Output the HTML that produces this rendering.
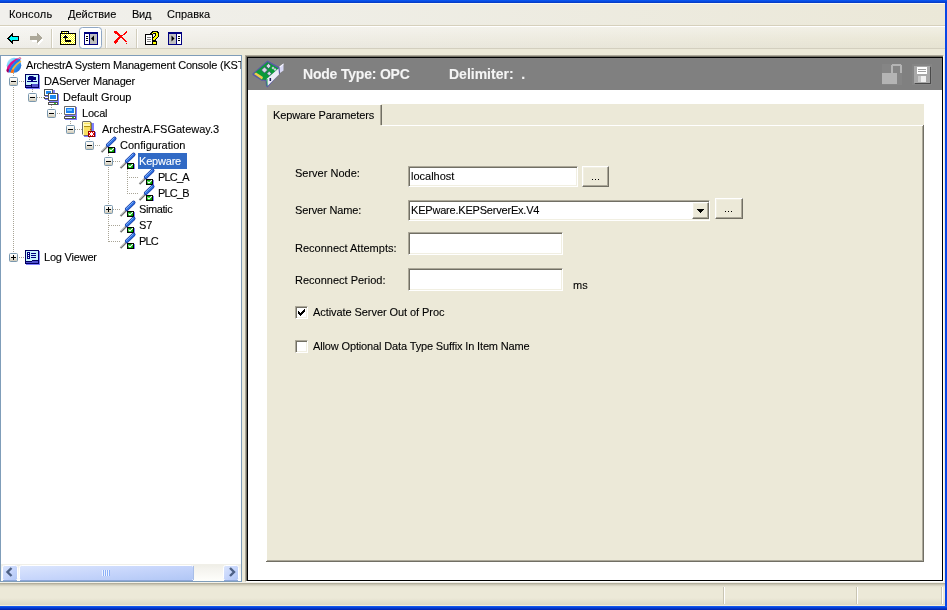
<!DOCTYPE html>
<html><head><meta charset="utf-8">
<style>
*{margin:0;padding:0;box-sizing:border-box}
html,body{width:947px;height:610px;overflow:hidden;background:#ECE9D8;font-family:"Liberation Sans",sans-serif;font-size:11px;color:#000}
.a{position:absolute}
.t{position:absolute;white-space:nowrap;line-height:13px;will-change:transform;-webkit-text-stroke:0.1px currentColor}
.sunk{background:#fff;border-style:solid;border-width:1px;border-color:#ACA899 #FFFFFF #FFFFFF #ACA899;box-shadow:inset 1px 1px 0 #716F64, inset -1px -1px 0 #F1EFE2}
.btn{background:#ECE9D8;border-style:solid;border-width:1px;border-color:#FFFFFF #716F64 #716F64 #FFFFFF;box-shadow:inset -1px -1px 0 #ACA899, inset 1px 1px 0 #F1EFE2}
</style></head><body>
<!-- blue frame -->
<div class="a" style="left:0;top:0;width:947px;height:3px;background:linear-gradient(#0A5AF6,#0846D8 60%,#0438C0)"></div>
<div class="a" style="left:0;top:3px;width:945px;height:1px;background:#FBFAF2"></div>
<div class="a" style="left:945px;top:3px;width:2px;height:603px;background:#0846E6"></div>
<div class="a" style="left:0;top:606px;width:947px;height:4px;background:linear-gradient(#1A60F4,#0440D8 40%,#0020A8)"></div>

<!-- menu bar -->
<div class="a" style="left:0;top:4px;width:945px;height:21px;background:linear-gradient(90deg,#F1F0EC,#EFEEE7 30%,#EBE8D8)"></div>
<div class="a" style="left:0;top:25px;width:945px;height:1px;background:#D6D0BC"></div>
<div class="a" style="left:0;top:26px;width:945px;height:1px;background:#FFFFFF"></div>
<div class="t" style="left:9px;top:8px;letter-spacing:0.15px">Консоль</div>
<div class="t" style="left:68px;top:8px">Действие</div>
<div class="t" style="left:132px;top:8px;letter-spacing:-0.3px">Вид</div>
<div class="t" style="left:167px;top:8px">Справка</div>

<!-- toolbar -->
<div class="a" style="left:0;top:27px;width:945px;height:21px;background:linear-gradient(rgba(255,255,255,0.35),rgba(255,255,255,0) 60%,rgba(0,0,0,0.02)),linear-gradient(90deg,#F2F1EC,#EFEDE5 30%,#EAE7D6)"></div>
<div class="a" style="left:0;top:48px;width:945px;height:1px;background:#D3CFBF"></div>


<svg class="a" style="left:0;top:26px" width="200" height="24" viewBox="0 26 200 24" shape-rendering="crispEdges">
<defs><pattern id="chk" width="2" height="2" patternUnits="userSpaceOnUse"><rect width="2" height="2" fill="#fff"/><rect width="1" height="1" fill="#FFFF00"/><rect x="1" y="1" width="1" height="1" fill="#FFFF00"/></pattern></defs>
<!-- back arrow -->
<polygon points="7,38 12,33 13,33 13,36 19,36 19,41 13,41 13,44 12,44" fill="#000"/>
<polygon points="9,38 12,35 12,37 18,37 18,40 12,40 12,42" fill="#00FFFF"/>
<!-- forward arrow disabled -->
<polygon points="31,37 37,37 37,34 43,39 37,44 37,41 31,41" fill="#fff" transform="translate(1,1)"/>
<polygon points="30,36 37,36 37,33 42,38 37,43 37,40 30,40" fill="#ACA899"/>
<!-- separators -->
<rect x="51" y="29" width="1" height="19" fill="#D1CDBC"/><rect x="52" y="29" width="1" height="19" fill="#fff"/>
<rect x="105" y="29" width="1" height="19" fill="#D1CDBC"/><rect x="106" y="29" width="1" height="19" fill="#fff"/>
<rect x="136" y="29" width="1" height="19" fill="#D1CDBC"/><rect x="137" y="29" width="1" height="19" fill="#fff"/>
<!-- folder up -->
<rect x="61" y="31" width="8" height="3" fill="#000"/>
<rect x="62" y="32" width="6" height="1" fill="url(#chk)"/>
<rect x="60" y="33" width="16" height="12" fill="#000"/>
<rect x="61" y="34" width="14" height="10" fill="url(#chk)"/>
<polygon points="65,35 68,38 66,38 66,40 71,40 71,42 65,42 65,38 63,38" fill="#000"/>
<!-- checked button -->
<rect x="79.5" y="27.5" width="22" height="21" rx="3" fill="#fff" stroke="#8FA7C4" stroke-width="1" shape-rendering="auto"/>
<!-- show tree icon -->
<rect x="84" y="32" width="14" height="13" fill="#000080"/>
<rect x="85" y="34" width="4" height="10" fill="#fff"/>
<rect x="90" y="34" width="7" height="10" fill="#C0C0C0"/>
<rect x="86" y="36" width="2" height="1" fill="#000"/><rect x="86" y="38" width="2" height="1" fill="#000"/><rect x="86" y="40" width="2" height="1" fill="#000"/>
<polygon points="91,38.5 94,35.5 94,41.5" fill="#000" shape-rendering="auto"/>
<!-- red X -->
<g fill="#FF0000"><rect x="114" y="31" width="3" height="1"/><rect x="126" y="31" width="1" height="1"/><rect x="114" y="32" width="4" height="1"/><rect x="125" y="32" width="2" height="1"/><rect x="115" y="33" width="4" height="1"/><rect x="124" y="33" width="2" height="1"/><rect x="117" y="34" width="3" height="1"/><rect x="123" y="34" width="2" height="1"/><rect x="118" y="35" width="5" height="1"/><rect x="119" y="36" width="3" height="1"/><rect x="118" y="37" width="5" height="1"/><rect x="117" y="38" width="3" height="1"/><rect x="122" y="38" width="2" height="1"/><rect x="116" y="39" width="3" height="1"/><rect x="123" y="39" width="2" height="1"/><rect x="115" y="40" width="3" height="1"/><rect x="124" y="40" width="2" height="1"/><rect x="114" y="41" width="4" height="1"/><rect x="125" y="41" width="2" height="1"/><rect x="114" y="42" width="3" height="1"/><rect x="115" y="43" width="1" height="1"/><rect x="126" y="43" width="1" height="1"/></g>
<!-- help -->
<rect x="145" y="34" width="8" height="11" fill="#000"/>
<rect x="146" y="35" width="6" height="9" fill="#fff"/>
<rect x="147" y="37" width="4" height="1" fill="#808080"/><rect x="147" y="39" width="4" height="1" fill="#808080"/><rect x="147" y="41" width="4" height="1" fill="#808080"/>
<path d="M150,34 L150,33 L152,31 L157,31 L159,33 L159,36 L156,39 L156,41 L152,41 L152,38 L155,35 L155,34 L153,34 L152,35 Z" fill="#000"/>
<path d="M151,34 L152,33 L153,32 L156,32 L158,34 L158,36 L155,39 L155,40 L153,40 L153,38 L156,35 L156,34 L155,33 L153,33 L152,34 Z" fill="#FFFF00"/>
<rect x="152" y="41" width="5" height="4" fill="#000"/><rect x="153" y="42" width="3" height="2" fill="#FFFF00"/>
<!-- action pane icon -->
<rect x="168" y="32" width="14" height="13" fill="#000080"/>
<rect x="169" y="34" width="7" height="10" fill="#C0C0C0"/>
<rect x="177" y="34" width="4" height="10" fill="#fff"/>
<rect x="178" y="36" width="2" height="1" fill="#000"/><rect x="178" y="38" width="2" height="1" fill="#000"/><rect x="178" y="40" width="2" height="1" fill="#000"/>
<polygon points="174.5,38.5 171.5,35.5 171.5,41.5" fill="#000" shape-rendering="auto"/>
</svg>

<!-- tree panel -->
<div class="a" style="left:0;top:55px;width:242px;height:527px;border:1px solid #7F9DB9;background:#fff"></div>
<svg class="a" style="left:0;top:0" width="242" height="290" viewBox="0 0 242 290">
<defs>
<linearGradient id="expg" x1="0" y1="0" x2="0" y2="1"><stop offset="0" stop-color="#FFFFFF"/><stop offset="0.5" stop-color="#F0EEE6"/><stop offset="1" stop-color="#C9C3B0"/></linearGradient>
<linearGradient id="archg" x1="0" y1="0" x2="1" y2="1"><stop offset="0" stop-color="#D8FAFF"/><stop offset="0.45" stop-color="#40B8F8"/><stop offset="1" stop-color="#1850D0"/></linearGradient>
</defs>

<g fill="#A8A496" shape-rendering="crispEdges"><rect x="13" y="73" width="1" height="1"/><rect x="13" y="75" width="1" height="1"/><rect x="13" y="77" width="1" height="1"/><rect x="13" y="79" width="1" height="1"/><rect x="13" y="81" width="1" height="1"/><rect x="13" y="81" width="1" height="1"/><rect x="15" y="81" width="1" height="1"/><rect x="17" y="81" width="1" height="1"/><rect x="19" y="81" width="1" height="1"/><rect x="21" y="81" width="1" height="1"/><rect x="23" y="81" width="1" height="1"/><rect x="32" y="89" width="1" height="1"/><rect x="32" y="91" width="1" height="1"/><rect x="32" y="93" width="1" height="1"/><rect x="32" y="95" width="1" height="1"/><rect x="32" y="97" width="1" height="1"/><rect x="33" y="97" width="1" height="1"/><rect x="35" y="97" width="1" height="1"/><rect x="37" y="97" width="1" height="1"/><rect x="39" y="97" width="1" height="1"/><rect x="41" y="97" width="1" height="1"/><rect x="43" y="97" width="1" height="1"/><rect x="51" y="105" width="1" height="1"/><rect x="51" y="107" width="1" height="1"/><rect x="51" y="109" width="1" height="1"/><rect x="51" y="111" width="1" height="1"/><rect x="51" y="113" width="1" height="1"/><rect x="51" y="113" width="1" height="1"/><rect x="53" y="113" width="1" height="1"/><rect x="55" y="113" width="1" height="1"/><rect x="57" y="113" width="1" height="1"/><rect x="59" y="113" width="1" height="1"/><rect x="61" y="113" width="1" height="1"/><rect x="70" y="121" width="1" height="1"/><rect x="70" y="123" width="1" height="1"/><rect x="70" y="125" width="1" height="1"/><rect x="70" y="127" width="1" height="1"/><rect x="70" y="129" width="1" height="1"/><rect x="71" y="129" width="1" height="1"/><rect x="73" y="129" width="1" height="1"/><rect x="75" y="129" width="1" height="1"/><rect x="77" y="129" width="1" height="1"/><rect x="79" y="129" width="1" height="1"/><rect x="81" y="129" width="1" height="1"/><rect x="89" y="137" width="1" height="1"/><rect x="89" y="139" width="1" height="1"/><rect x="89" y="141" width="1" height="1"/><rect x="89" y="143" width="1" height="1"/><rect x="89" y="145" width="1" height="1"/><rect x="89" y="145" width="1" height="1"/><rect x="91" y="145" width="1" height="1"/><rect x="93" y="145" width="1" height="1"/><rect x="95" y="145" width="1" height="1"/><rect x="97" y="145" width="1" height="1"/><rect x="99" y="145" width="1" height="1"/><rect x="108" y="153" width="1" height="1"/><rect x="108" y="155" width="1" height="1"/><rect x="108" y="157" width="1" height="1"/><rect x="108" y="159" width="1" height="1"/><rect x="108" y="161" width="1" height="1"/><rect x="109" y="161" width="1" height="1"/><rect x="111" y="161" width="1" height="1"/><rect x="113" y="161" width="1" height="1"/><rect x="115" y="161" width="1" height="1"/><rect x="117" y="161" width="1" height="1"/><rect x="119" y="161" width="1" height="1"/><rect x="127" y="169" width="1" height="1"/><rect x="127" y="171" width="1" height="1"/><rect x="127" y="173" width="1" height="1"/><rect x="127" y="175" width="1" height="1"/><rect x="127" y="177" width="1" height="1"/><rect x="127" y="177" width="1" height="1"/><rect x="129" y="177" width="1" height="1"/><rect x="131" y="177" width="1" height="1"/><rect x="133" y="177" width="1" height="1"/><rect x="135" y="177" width="1" height="1"/><rect x="137" y="177" width="1" height="1"/><rect x="127" y="169" width="1" height="1"/><rect x="127" y="171" width="1" height="1"/><rect x="127" y="173" width="1" height="1"/><rect x="127" y="175" width="1" height="1"/><rect x="127" y="177" width="1" height="1"/><rect x="127" y="179" width="1" height="1"/><rect x="127" y="181" width="1" height="1"/><rect x="127" y="183" width="1" height="1"/><rect x="127" y="185" width="1" height="1"/><rect x="127" y="187" width="1" height="1"/><rect x="127" y="189" width="1" height="1"/><rect x="127" y="191" width="1" height="1"/><rect x="127" y="193" width="1" height="1"/><rect x="127" y="193" width="1" height="1"/><rect x="129" y="193" width="1" height="1"/><rect x="131" y="193" width="1" height="1"/><rect x="133" y="193" width="1" height="1"/><rect x="135" y="193" width="1" height="1"/><rect x="137" y="193" width="1" height="1"/><rect x="108" y="153" width="1" height="1"/><rect x="108" y="155" width="1" height="1"/><rect x="108" y="157" width="1" height="1"/><rect x="108" y="159" width="1" height="1"/><rect x="108" y="161" width="1" height="1"/><rect x="108" y="163" width="1" height="1"/><rect x="108" y="165" width="1" height="1"/><rect x="108" y="167" width="1" height="1"/><rect x="108" y="169" width="1" height="1"/><rect x="108" y="171" width="1" height="1"/><rect x="108" y="173" width="1" height="1"/><rect x="108" y="175" width="1" height="1"/><rect x="108" y="177" width="1" height="1"/><rect x="108" y="179" width="1" height="1"/><rect x="108" y="181" width="1" height="1"/><rect x="108" y="183" width="1" height="1"/><rect x="108" y="185" width="1" height="1"/><rect x="108" y="187" width="1" height="1"/><rect x="108" y="189" width="1" height="1"/><rect x="108" y="191" width="1" height="1"/><rect x="108" y="193" width="1" height="1"/><rect x="108" y="195" width="1" height="1"/><rect x="108" y="197" width="1" height="1"/><rect x="108" y="199" width="1" height="1"/><rect x="108" y="201" width="1" height="1"/><rect x="108" y="203" width="1" height="1"/><rect x="108" y="205" width="1" height="1"/><rect x="108" y="207" width="1" height="1"/><rect x="108" y="209" width="1" height="1"/><rect x="109" y="209" width="1" height="1"/><rect x="111" y="209" width="1" height="1"/><rect x="113" y="209" width="1" height="1"/><rect x="115" y="209" width="1" height="1"/><rect x="117" y="209" width="1" height="1"/><rect x="119" y="209" width="1" height="1"/><rect x="108" y="153" width="1" height="1"/><rect x="108" y="155" width="1" height="1"/><rect x="108" y="157" width="1" height="1"/><rect x="108" y="159" width="1" height="1"/><rect x="108" y="161" width="1" height="1"/><rect x="108" y="163" width="1" height="1"/><rect x="108" y="165" width="1" height="1"/><rect x="108" y="167" width="1" height="1"/><rect x="108" y="169" width="1" height="1"/><rect x="108" y="171" width="1" height="1"/><rect x="108" y="173" width="1" height="1"/><rect x="108" y="175" width="1" height="1"/><rect x="108" y="177" width="1" height="1"/><rect x="108" y="179" width="1" height="1"/><rect x="108" y="181" width="1" height="1"/><rect x="108" y="183" width="1" height="1"/><rect x="108" y="185" width="1" height="1"/><rect x="108" y="187" width="1" height="1"/><rect x="108" y="189" width="1" height="1"/><rect x="108" y="191" width="1" height="1"/><rect x="108" y="193" width="1" height="1"/><rect x="108" y="195" width="1" height="1"/><rect x="108" y="197" width="1" height="1"/><rect x="108" y="199" width="1" height="1"/><rect x="108" y="201" width="1" height="1"/><rect x="108" y="203" width="1" height="1"/><rect x="108" y="205" width="1" height="1"/><rect x="108" y="207" width="1" height="1"/><rect x="108" y="209" width="1" height="1"/><rect x="108" y="211" width="1" height="1"/><rect x="108" y="213" width="1" height="1"/><rect x="108" y="215" width="1" height="1"/><rect x="108" y="217" width="1" height="1"/><rect x="108" y="219" width="1" height="1"/><rect x="108" y="221" width="1" height="1"/><rect x="108" y="223" width="1" height="1"/><rect x="108" y="225" width="1" height="1"/><rect x="109" y="225" width="1" height="1"/><rect x="111" y="225" width="1" height="1"/><rect x="113" y="225" width="1" height="1"/><rect x="115" y="225" width="1" height="1"/><rect x="117" y="225" width="1" height="1"/><rect x="119" y="225" width="1" height="1"/><rect x="108" y="153" width="1" height="1"/><rect x="108" y="155" width="1" height="1"/><rect x="108" y="157" width="1" height="1"/><rect x="108" y="159" width="1" height="1"/><rect x="108" y="161" width="1" height="1"/><rect x="108" y="163" width="1" height="1"/><rect x="108" y="165" width="1" height="1"/><rect x="108" y="167" width="1" height="1"/><rect x="108" y="169" width="1" height="1"/><rect x="108" y="171" width="1" height="1"/><rect x="108" y="173" width="1" height="1"/><rect x="108" y="175" width="1" height="1"/><rect x="108" y="177" width="1" height="1"/><rect x="108" y="179" width="1" height="1"/><rect x="108" y="181" width="1" height="1"/><rect x="108" y="183" width="1" height="1"/><rect x="108" y="185" width="1" height="1"/><rect x="108" y="187" width="1" height="1"/><rect x="108" y="189" width="1" height="1"/><rect x="108" y="191" width="1" height="1"/><rect x="108" y="193" width="1" height="1"/><rect x="108" y="195" width="1" height="1"/><rect x="108" y="197" width="1" height="1"/><rect x="108" y="199" width="1" height="1"/><rect x="108" y="201" width="1" height="1"/><rect x="108" y="203" width="1" height="1"/><rect x="108" y="205" width="1" height="1"/><rect x="108" y="207" width="1" height="1"/><rect x="108" y="209" width="1" height="1"/><rect x="108" y="211" width="1" height="1"/><rect x="108" y="213" width="1" height="1"/><rect x="108" y="215" width="1" height="1"/><rect x="108" y="217" width="1" height="1"/><rect x="108" y="219" width="1" height="1"/><rect x="108" y="221" width="1" height="1"/><rect x="108" y="223" width="1" height="1"/><rect x="108" y="225" width="1" height="1"/><rect x="108" y="227" width="1" height="1"/><rect x="108" y="229" width="1" height="1"/><rect x="108" y="231" width="1" height="1"/><rect x="108" y="233" width="1" height="1"/><rect x="108" y="235" width="1" height="1"/><rect x="108" y="237" width="1" height="1"/><rect x="108" y="239" width="1" height="1"/><rect x="108" y="241" width="1" height="1"/><rect x="109" y="241" width="1" height="1"/><rect x="111" y="241" width="1" height="1"/><rect x="113" y="241" width="1" height="1"/><rect x="115" y="241" width="1" height="1"/><rect x="117" y="241" width="1" height="1"/><rect x="119" y="241" width="1" height="1"/><rect x="13" y="73" width="1" height="1"/><rect x="13" y="75" width="1" height="1"/><rect x="13" y="77" width="1" height="1"/><rect x="13" y="79" width="1" height="1"/><rect x="13" y="81" width="1" height="1"/><rect x="13" y="83" width="1" height="1"/><rect x="13" y="85" width="1" height="1"/><rect x="13" y="87" width="1" height="1"/><rect x="13" y="89" width="1" height="1"/><rect x="13" y="91" width="1" height="1"/><rect x="13" y="93" width="1" height="1"/><rect x="13" y="95" width="1" height="1"/><rect x="13" y="97" width="1" height="1"/><rect x="13" y="99" width="1" height="1"/><rect x="13" y="101" width="1" height="1"/><rect x="13" y="103" width="1" height="1"/><rect x="13" y="105" width="1" height="1"/><rect x="13" y="107" width="1" height="1"/><rect x="13" y="109" width="1" height="1"/><rect x="13" y="111" width="1" height="1"/><rect x="13" y="113" width="1" height="1"/><rect x="13" y="115" width="1" height="1"/><rect x="13" y="117" width="1" height="1"/><rect x="13" y="119" width="1" height="1"/><rect x="13" y="121" width="1" height="1"/><rect x="13" y="123" width="1" height="1"/><rect x="13" y="125" width="1" height="1"/><rect x="13" y="127" width="1" height="1"/><rect x="13" y="129" width="1" height="1"/><rect x="13" y="131" width="1" height="1"/><rect x="13" y="133" width="1" height="1"/><rect x="13" y="135" width="1" height="1"/><rect x="13" y="137" width="1" height="1"/><rect x="13" y="139" width="1" height="1"/><rect x="13" y="141" width="1" height="1"/><rect x="13" y="143" width="1" height="1"/><rect x="13" y="145" width="1" height="1"/><rect x="13" y="147" width="1" height="1"/><rect x="13" y="149" width="1" height="1"/><rect x="13" y="151" width="1" height="1"/><rect x="13" y="153" width="1" height="1"/><rect x="13" y="155" width="1" height="1"/><rect x="13" y="157" width="1" height="1"/><rect x="13" y="159" width="1" height="1"/><rect x="13" y="161" width="1" height="1"/><rect x="13" y="163" width="1" height="1"/><rect x="13" y="165" width="1" height="1"/><rect x="13" y="167" width="1" height="1"/><rect x="13" y="169" width="1" height="1"/><rect x="13" y="171" width="1" height="1"/><rect x="13" y="173" width="1" height="1"/><rect x="13" y="175" width="1" height="1"/><rect x="13" y="177" width="1" height="1"/><rect x="13" y="179" width="1" height="1"/><rect x="13" y="181" width="1" height="1"/><rect x="13" y="183" width="1" height="1"/><rect x="13" y="185" width="1" height="1"/><rect x="13" y="187" width="1" height="1"/><rect x="13" y="189" width="1" height="1"/><rect x="13" y="191" width="1" height="1"/><rect x="13" y="193" width="1" height="1"/><rect x="13" y="195" width="1" height="1"/><rect x="13" y="197" width="1" height="1"/><rect x="13" y="199" width="1" height="1"/><rect x="13" y="201" width="1" height="1"/><rect x="13" y="203" width="1" height="1"/><rect x="13" y="205" width="1" height="1"/><rect x="13" y="207" width="1" height="1"/><rect x="13" y="209" width="1" height="1"/><rect x="13" y="211" width="1" height="1"/><rect x="13" y="213" width="1" height="1"/><rect x="13" y="215" width="1" height="1"/><rect x="13" y="217" width="1" height="1"/><rect x="13" y="219" width="1" height="1"/><rect x="13" y="221" width="1" height="1"/><rect x="13" y="223" width="1" height="1"/><rect x="13" y="225" width="1" height="1"/><rect x="13" y="227" width="1" height="1"/><rect x="13" y="229" width="1" height="1"/><rect x="13" y="231" width="1" height="1"/><rect x="13" y="233" width="1" height="1"/><rect x="13" y="235" width="1" height="1"/><rect x="13" y="237" width="1" height="1"/><rect x="13" y="239" width="1" height="1"/><rect x="13" y="241" width="1" height="1"/><rect x="13" y="243" width="1" height="1"/><rect x="13" y="245" width="1" height="1"/><rect x="13" y="247" width="1" height="1"/><rect x="13" y="249" width="1" height="1"/><rect x="13" y="251" width="1" height="1"/><rect x="13" y="253" width="1" height="1"/><rect x="13" y="255" width="1" height="1"/><rect x="13" y="257" width="1" height="1"/><rect x="13" y="257" width="1" height="1"/><rect x="15" y="257" width="1" height="1"/><rect x="17" y="257" width="1" height="1"/><rect x="19" y="257" width="1" height="1"/><rect x="21" y="257" width="1" height="1"/><rect x="23" y="257" width="1" height="1"/></g>
<g transform="translate(9,77)"><rect x="0.5" y="0.5" width="8" height="8" rx="1" fill="url(#expg)" stroke="#7A98AF"/>
<rect x="2" y="4" width="5" height="1" fill="#000"/></g>
<g transform="translate(28,93)"><rect x="0.5" y="0.5" width="8" height="8" rx="1" fill="url(#expg)" stroke="#7A98AF"/>
<rect x="2" y="4" width="5" height="1" fill="#000"/></g>
<g transform="translate(47,109)"><rect x="0.5" y="0.5" width="8" height="8" rx="1" fill="url(#expg)" stroke="#7A98AF"/>
<rect x="2" y="4" width="5" height="1" fill="#000"/></g>
<g transform="translate(66,125)"><rect x="0.5" y="0.5" width="8" height="8" rx="1" fill="url(#expg)" stroke="#7A98AF"/>
<rect x="2" y="4" width="5" height="1" fill="#000"/></g>
<g transform="translate(85,141)"><rect x="0.5" y="0.5" width="8" height="8" rx="1" fill="url(#expg)" stroke="#7A98AF"/>
<rect x="2" y="4" width="5" height="1" fill="#000"/></g>
<g transform="translate(104,157)"><rect x="0.5" y="0.5" width="8" height="8" rx="1" fill="url(#expg)" stroke="#7A98AF"/>
<rect x="2" y="4" width="5" height="1" fill="#000"/></g>
<g transform="translate(104,205)"><rect x="0.5" y="0.5" width="8" height="8" rx="1" fill="url(#expg)" stroke="#7A98AF"/>
<rect x="2" y="4" width="5" height="1" fill="#000"/><rect x="4" y="2" width="1" height="5" fill="#000"/></g>
<g transform="translate(9,253)"><rect x="0.5" y="0.5" width="8" height="8" rx="1" fill="url(#expg)" stroke="#7A98AF"/>
<rect x="2" y="4" width="5" height="1" fill="#000"/><rect x="4" y="2" width="1" height="5" fill="#000"/></g>
<g transform="translate(6,57)"><ellipse cx="8" cy="8.3" rx="7.3" ry="7.5" fill="url(#archg)"/>
<path d="M0.5,13 L1.5,9.5 L5,5 L9.5,2 L12,1.2 L13.5,1.5 L9.5,4 L5.5,8.5 L3,13 L2.5,15.5 L1,15 Z" fill="#E0108A"/>
<path d="M0.5,13 L1,15 L2.5,15.5 L3,13 L2,11.5 Z" fill="#A00060"/>
<path d="M2.5,15.5 L3,13 L5.5,8.5 L9.5,4 L13.5,1.5 L15,3 L10.5,6 L7,10 L5,15.5 Z" fill="#2078E8"/>
<path d="M4.5,15.8 L6.5,11 L10,7 L14.5,3.5 L15.3,4.8 L11,8 L8,12 L7.5,15.8 Z" fill="#FFB828"/>
<path d="M4.5,15.8 L5.8,12.5 L8,12.5 L7.5,15.8 Z" fill="#FF6A10"/>
<path d="M12.5,0.3 L14.5,0.3 L15.5,1.8 L14,2 Z" fill="#E07090"/></g>
<g transform="translate(25,73)"><rect x="1" y="2" width="14" height="14" fill="#8080FF"/>
<rect x="0" y="1" width="14" height="14" fill="#000060"/>
<rect x="1" y="2" width="12" height="9" fill="#C8F4FF"/>
<rect x="1" y="11" width="5" height="1" fill="#C8F4FF"/>
<path d="M4,3 L8,3 L9,4 L11,4 L11,7 L3,7 L3,4 L4,4 Z" fill="#000080"/>
<rect x="2" y="8" width="4" height="1" fill="#000080"/><rect x="8" y="8" width="4" height="1" fill="#000080"/><rect x="6" y="7" width="2" height="2" fill="#000080"/>
<rect x="7" y="11" width="6" height="3" fill="#5050D0"/>
<rect x="1" y="13" width="5" height="1" fill="#5050D0"/></g>
<g transform="translate(44,89)"><g>
<rect x="1" y="1" width="10" height="10" fill="#8080FF"/>
<rect x="0" y="0" width="9" height="7" fill="#505050"/>
<rect x="1" y="1" width="7" height="5" fill="#FFFFFF"/>
<rect x="2" y="2" width="5" height="3" fill="#1E88F0"/>
<rect x="0" y="8" width="9" height="2" fill="#505050"/><rect x="1" y="8" width="7" height="1" fill="#fff"/>
</g>
<g transform="translate(4,4)">
<rect x="1" y="1" width="10" height="11" fill="#8080FF"/>
<rect x="0" y="0" width="10" height="8" fill="#505050"/>
<rect x="1" y="1" width="8" height="6" fill="#FFFFFF"/>
<rect x="2" y="2" width="6" height="4" fill="#1E88F0"/>
<rect x="0" y="9" width="10" height="3" fill="#505050"/><rect x="1" y="10" width="8" height="1" fill="#fff"/><rect x="6" y="10" width="2" height="1" fill="#30D030"/>
</g></g>
<g transform="translate(63,105)"><rect x="2" y="2" width="12" height="13" fill="#8080FF"/>
<rect x="1" y="1" width="12" height="9" rx="1" fill="#6A6A6A"/>
<rect x="2" y="2" width="10" height="7" fill="#FFFFFF"/>
<rect x="3" y="3" width="8" height="5" fill="#1A80F0"/>
<rect x="4" y="4" width="5" height="2" fill="#70C0FF"/>
<rect x="1" y="11" width="12" height="3" rx="0.5" fill="#505050"/><rect x="2" y="12" width="10" height="1" fill="#fff"/><rect x="9" y="12" width="2" height="1" fill="#20C020"/></g>
<g transform="translate(82,121)"><rect x="2" y="2" width="10" height="14" fill="#8080FF"/>
<path d="M1,0 L8,0 L10,2 L10,15 L2,15 L0,13 L0,1 Z" fill="#6A6A6A"/>
<rect x="1" y="1" width="7" height="13" fill="#F8E060"/>
<rect x="1" y="1" width="7" height="1" fill="#FFF8B0"/>
<rect x="8" y="2" width="1" height="12" fill="#C8A820"/>
<rect x="2" y="3" width="6" height="2" fill="#FFF8B0"/>
<rect x="2" y="5" width="6" height="1" fill="#B09010"/>
<rect x="1" y="1" width="1" height="13" fill="#FFFFC0"/>
<rect x="8" y="8" width="1" height="1" fill="#FF0000"/>
<rect x="6" y="10" width="7" height="6" fill="#900000"/>
<rect x="7" y="11" width="5" height="4" fill="#fff"/>
<g shape-rendering="crispEdges" fill="#FF0000"><rect x="7" y="12" width="1" height="2"/><rect x="11" y="12" width="1" height="2"/><rect x="8" y="11" width="1" height="1"/><rect x="10" y="11" width="1" height="1"/><rect x="8" y="14" width="1" height="1"/><rect x="10" y="14" width="1" height="1"/></g>
<rect x="13" y="11" width="1" height="5" fill="#8080FF"/></g>
<g transform="translate(101,137)"><line x1="0.5" y1="15" x2="6.5" y2="9" stroke="#707070" stroke-width="2"/>
<line x1="0.3" y1="14.3" x2="6" y2="8.6" stroke="#F0F0F0" stroke-width="0.9"/>
<line x1="6.8" y1="8.2" x2="13.6" y2="1.6" stroke="#10309A" stroke-width="3.8" stroke-linecap="round"/>
<line x1="6.8" y1="8.2" x2="13.6" y2="1.6" stroke="#3070E0" stroke-width="2.6" stroke-linecap="round"/>
<line x1="6.2" y1="7.6" x2="13" y2="1" stroke="#90C0FF" stroke-width="0.9" stroke-linecap="round"/>
<rect x="7" y="10" width="7" height="6" fill="#000"/>
<rect x="8" y="11" width="5" height="4" fill="#00A800"/>
<path d="M8.5,12.5 L10,14 L12.8,11.2" stroke="#fff" stroke-width="1.1" fill="none"/>
<rect x="14" y="11" width="1" height="5" fill="#8080FF"/></g>
<g transform="translate(120,153)"><line x1="0.5" y1="15" x2="6.5" y2="9" stroke="#707070" stroke-width="2"/>
<line x1="0.3" y1="14.3" x2="6" y2="8.6" stroke="#F0F0F0" stroke-width="0.9"/>
<line x1="6.8" y1="8.2" x2="13.6" y2="1.6" stroke="#10309A" stroke-width="3.8" stroke-linecap="round"/>
<line x1="6.8" y1="8.2" x2="13.6" y2="1.6" stroke="#3070E0" stroke-width="2.6" stroke-linecap="round"/>
<line x1="6.2" y1="7.6" x2="13" y2="1" stroke="#90C0FF" stroke-width="0.9" stroke-linecap="round"/>
<rect x="7" y="10" width="7" height="6" fill="#000"/>
<rect x="8" y="11" width="5" height="4" fill="#00A800"/>
<path d="M8.5,12.5 L10,14 L12.8,11.2" stroke="#fff" stroke-width="1.1" fill="none"/>
<rect x="14" y="11" width="1" height="5" fill="#8080FF"/></g>
<g transform="translate(139,169)"><line x1="0.5" y1="15" x2="6.5" y2="9" stroke="#707070" stroke-width="2"/>
<line x1="0.3" y1="14.3" x2="6" y2="8.6" stroke="#F0F0F0" stroke-width="0.9"/>
<line x1="6.8" y1="8.2" x2="13.6" y2="1.6" stroke="#10309A" stroke-width="3.8" stroke-linecap="round"/>
<line x1="6.8" y1="8.2" x2="13.6" y2="1.6" stroke="#3070E0" stroke-width="2.6" stroke-linecap="round"/>
<line x1="6.2" y1="7.6" x2="13" y2="1" stroke="#90C0FF" stroke-width="0.9" stroke-linecap="round"/>
<rect x="7" y="10" width="7" height="6" fill="#000"/>
<rect x="8" y="11" width="5" height="4" fill="#00A800"/>
<path d="M8.5,12.5 L10,14 L12.8,11.2" stroke="#fff" stroke-width="1.1" fill="none"/>
<rect x="14" y="11" width="1" height="5" fill="#8080FF"/></g>
<g transform="translate(139,185)"><line x1="0.5" y1="15" x2="6.5" y2="9" stroke="#707070" stroke-width="2"/>
<line x1="0.3" y1="14.3" x2="6" y2="8.6" stroke="#F0F0F0" stroke-width="0.9"/>
<line x1="6.8" y1="8.2" x2="13.6" y2="1.6" stroke="#10309A" stroke-width="3.8" stroke-linecap="round"/>
<line x1="6.8" y1="8.2" x2="13.6" y2="1.6" stroke="#3070E0" stroke-width="2.6" stroke-linecap="round"/>
<line x1="6.2" y1="7.6" x2="13" y2="1" stroke="#90C0FF" stroke-width="0.9" stroke-linecap="round"/>
<rect x="7" y="10" width="7" height="6" fill="#000"/>
<rect x="8" y="11" width="5" height="4" fill="#00A800"/>
<path d="M8.5,12.5 L10,14 L12.8,11.2" stroke="#fff" stroke-width="1.1" fill="none"/>
<rect x="14" y="11" width="1" height="5" fill="#8080FF"/></g>
<g transform="translate(120,201)"><line x1="0.5" y1="15" x2="6.5" y2="9" stroke="#707070" stroke-width="2"/>
<line x1="0.3" y1="14.3" x2="6" y2="8.6" stroke="#F0F0F0" stroke-width="0.9"/>
<line x1="6.8" y1="8.2" x2="13.6" y2="1.6" stroke="#10309A" stroke-width="3.8" stroke-linecap="round"/>
<line x1="6.8" y1="8.2" x2="13.6" y2="1.6" stroke="#3070E0" stroke-width="2.6" stroke-linecap="round"/>
<line x1="6.2" y1="7.6" x2="13" y2="1" stroke="#90C0FF" stroke-width="0.9" stroke-linecap="round"/>
<rect x="7" y="10" width="7" height="6" fill="#000"/>
<rect x="8" y="11" width="5" height="4" fill="#00A800"/>
<path d="M8.5,12.5 L10,14 L12.8,11.2" stroke="#fff" stroke-width="1.1" fill="none"/>
<rect x="14" y="11" width="1" height="5" fill="#8080FF"/></g>
<g transform="translate(120,217)"><line x1="0.5" y1="15" x2="6.5" y2="9" stroke="#707070" stroke-width="2"/>
<line x1="0.3" y1="14.3" x2="6" y2="8.6" stroke="#F0F0F0" stroke-width="0.9"/>
<line x1="6.8" y1="8.2" x2="13.6" y2="1.6" stroke="#10309A" stroke-width="3.8" stroke-linecap="round"/>
<line x1="6.8" y1="8.2" x2="13.6" y2="1.6" stroke="#3070E0" stroke-width="2.6" stroke-linecap="round"/>
<line x1="6.2" y1="7.6" x2="13" y2="1" stroke="#90C0FF" stroke-width="0.9" stroke-linecap="round"/>
<rect x="7" y="10" width="7" height="6" fill="#000"/>
<rect x="8" y="11" width="5" height="4" fill="#00A800"/>
<path d="M8.5,12.5 L10,14 L12.8,11.2" stroke="#fff" stroke-width="1.1" fill="none"/>
<rect x="14" y="11" width="1" height="5" fill="#8080FF"/></g>
<g transform="translate(120,233)"><line x1="0.5" y1="15" x2="6.5" y2="9" stroke="#707070" stroke-width="2"/>
<line x1="0.3" y1="14.3" x2="6" y2="8.6" stroke="#F0F0F0" stroke-width="0.9"/>
<line x1="6.8" y1="8.2" x2="13.6" y2="1.6" stroke="#10309A" stroke-width="3.8" stroke-linecap="round"/>
<line x1="6.8" y1="8.2" x2="13.6" y2="1.6" stroke="#3070E0" stroke-width="2.6" stroke-linecap="round"/>
<line x1="6.2" y1="7.6" x2="13" y2="1" stroke="#90C0FF" stroke-width="0.9" stroke-linecap="round"/>
<rect x="7" y="10" width="7" height="6" fill="#000"/>
<rect x="8" y="11" width="5" height="4" fill="#00A800"/>
<path d="M8.5,12.5 L10,14 L12.8,11.2" stroke="#fff" stroke-width="1.1" fill="none"/>
<rect x="14" y="11" width="1" height="5" fill="#8080FF"/></g>
<g transform="translate(25,249)"><rect x="1" y="2" width="14" height="14" fill="#8080FF"/>
<rect x="0" y="1" width="14" height="14" fill="#000060"/>
<rect x="1" y="2" width="12" height="9" fill="#C8F4FF"/>
<rect x="1" y="11" width="6" height="1" fill="#C8F4FF"/>
<rect x="2" y="3" width="3" height="7" fill="#000080"/>
<rect x="3" y="4" width="1" height="1" fill="#fff"/><rect x="3" y="6" width="1" height="1" fill="#fff"/><rect x="3" y="8" width="1" height="1" fill="#fff"/>
<rect x="6" y="4" width="5" height="1" fill="#000080"/><rect x="6" y="6" width="5" height="1" fill="#000080"/><rect x="6" y="8" width="5" height="1" fill="#000080"/>
<rect x="7" y="12" width="6" height="2" fill="#5050D0"/>
<rect x="1" y="13" width="6" height="1" fill="#5050D0"/></g>
</svg>
<div class="a" style="left:1px;top:56px;width:240px;height:508px;overflow:hidden"><div class="a" style="left:-1px;top:-56px;width:947px;height:610px">
<div class="t" style="left:26px;top:59px;letter-spacing:-0.2px">ArchestrA System Management Console (KST</div>
<div class="t" style="left:44px;top:75px;letter-spacing:-0.2px">DAServer Manager</div>
<div class="t" style="left:63px;top:91px;letter-spacing:0px">Default Group</div>
<div class="t" style="left:82px;top:107px;letter-spacing:-0.2px">Local</div>
<div class="t" style="left:102px;top:123px;letter-spacing:0px">ArchestrA.FSGateway.3</div>
<div class="t" style="left:120px;top:139px;letter-spacing:0px">Configuration</div>
<div class="a" style="left:138px;top:153px;width:49px;height:16px;background:#316AC5"></div>
<div class="t" style="left:139px;top:155px;letter-spacing:-0.2px;color:#fff">Kepware</div>
<div class="t" style="left:158px;top:171px;letter-spacing:-0.8px">PLC_A</div>
<div class="t" style="left:158px;top:187px;letter-spacing:-0.8px">PLC_B</div>
<div class="t" style="left:139px;top:203px;letter-spacing:-0.4px">Simatic</div>
<div class="t" style="left:139px;top:219px;letter-spacing:-0.2px">S7</div>
<div class="t" style="left:139px;top:235px;letter-spacing:-0.9px">PLC</div>
<div class="t" style="left:44px;top:251px;letter-spacing:-0.2px">Log Viewer</div>
</div></div>


<!-- right panel -->
<div class="a" style="left:245px;top:55px;width:699px;height:527px;border-top:1px solid #ACA899;border-left:1px solid #ACA899;border-right:1px solid #fff;border-bottom:1px solid #fff"></div>
<div class="a" style="left:246px;top:56px;width:697px;height:525px;border-top:1px solid #716F64;border-left:1px solid #716F64"></div>
<div class="a" style="left:247px;top:57px;width:696px;height:524px;border:1px solid #000;background:#fff"></div>
<div class="a" style="left:248px;top:58px;width:694px;height:32px;background:#808080"></div>


<!-- right panel content -->
<svg class="a" style="left:248px;top:58px" width="694" height="32" viewBox="248 58 694 32">
<g>
<path d="M252.5,73.5 L267.5,60.5 L280,67.5 L280,73 L267.5,87.5 L266,86 L265.5,81 L263,80.5 L262,81 L252.5,75 Z" fill="#5A58A8"/>
<path d="M254,73.5 L267.5,62 L278.5,68.5 L266.5,80 L263,79.5 L262,80 Z" fill="#0C9A3A"/>
<path d="M254,74 L256,72.5 L263,77 L262,79.5 Z" fill="#F0C850"/>
<path d="M261.5,70 L264.5,67 L267.5,70 L264.5,73 Z" fill="#D8D8E8" stroke="#30306a" stroke-width="0.5"/>
<path d="M266,66 L268.5,63.5 L271,66 L268.5,68.5 Z" fill="#D8D8E8" stroke="#30306a" stroke-width="0.5"/>
<path d="M267,73.5 L269.2,71.3 L271.4,73.5 L269.2,75.7 Z" fill="#D8D8E8" stroke="#30306a" stroke-width="0.5"/>
<path d="M271.5,68 L273,66.5 L274.5,68 L273,69.5 Z" fill="#D0D0E0"/>
<path d="M273.5,69.5 L275,68 L276.5,69.5 L275,71 Z" fill="#D0D0E0"/>
<path d="M266.5,79 L278.5,68.5 L279,74.5 L267.5,86 Z" fill="#EDEDF8"/>
<path d="M266.5,79 L267.5,79 L267.5,86 L266.8,86 Z" fill="#10A040"/>
<path d="M279.5,66.5 L283.5,63.5 L283.5,70.5 L280,73 Z" fill="#D8D8F4"/>
<path d="M279.5,66.5 L283.5,63.5 L283.5,64.5 L280,67.5 Z" fill="#F8F8FF"/>
<rect x="269.5" y="78" width="1.6" height="3" fill="#202060"/>
</g>
</svg>
<div class="t" style="left:303px;top:66px;font-size:14px;font-weight:bold;color:#F4F4F4;line-height:16px;letter-spacing:-0.2px">Node Type: OPC</div>
<div class="t" style="left:449px;top:66px;font-size:14px;font-weight:bold;color:#F4F4F4;line-height:16px">Delimiter:&nbsp; .</div>
<!-- lock icon -->
<svg class="a" style="left:880px;top:62px" width="56" height="24" viewBox="880 62 56 24" shape-rendering="crispEdges">
<rect x="882" y="64" width="20" height="21" fill="#858585"/>
<rect x="882" y="73" width="15" height="11" fill="#B4B4B4"/>
<path d="M891,73 L891,65 L892,64 L900,64 L902,66 L902,73 L900,73 L900,66 L893,66 L893,73 Z" fill="#B4B4B4"/>
<rect x="912" y="64" width="20" height="21" fill="#858585"/>
<rect x="915" y="67" width="16" height="17" fill="#4A4A4A"/>
<rect x="914" y="66" width="16" height="17" fill="#A8A8A8"/>
<rect x="917" y="67" width="10" height="7" fill="#FFFFFF"/>
<rect x="918" y="69" width="8" height="1" fill="#A0A0A0"/><rect x="918" y="71" width="8" height="1" fill="#A0A0A0"/>
<rect x="918" y="76" width="8" height="6" fill="#F0F0F0"/>
<rect x="918" y="76" width="3" height="6" fill="#C8C8C8"/>
</svg>


<!-- property sheet -->
<div class="a" style="left:266px;top:104px;width:658px;height:458px;background:#ECE9D8"></div>
<div class="a" style="left:266px;top:104px;width:115px;height:1px;background:#fff"></div>
<div class="a" style="left:266px;top:104px;width:1px;height:457px;background:#fff"></div>
<div class="a" style="left:380px;top:105px;width:1px;height:20px;background:#ACA899"></div>
<div class="a" style="left:381px;top:105px;width:1px;height:20px;background:#716F64"></div>
<div class="a" style="left:382px;top:125px;width:541px;height:1px;background:#fff"></div>
<div class="a" style="left:922px;top:126px;width:1px;height:435px;background:#ACA899"></div>
<div class="a" style="left:923px;top:125px;width:1px;height:437px;background:#716F64"></div>
<div class="a" style="left:267px;top:560px;width:656px;height:1px;background:#ACA899"></div>
<div class="a" style="left:266px;top:561px;width:658px;height:1px;background:#716F64"></div>
<div class="t" style="left:273px;top:109px;letter-spacing:-0.12px">Kepware Parameters</div>

<div class="t" style="left:295px;top:167px">Server Node:</div>
<div class="t" style="left:295px;top:204px;letter-spacing:-0.15px">Server Name:</div>
<div class="t" style="left:295px;top:242px">Reconnect Attempts:</div>
<div class="t" style="left:295px;top:274px">Reconnect Period:</div>

<div class="a sunk" style="left:408px;top:166px;width:170px;height:21px"></div>
<div class="t" style="left:411px;top:170px">localhost</div>
<div class="a btn" style="left:582px;top:166px;width:27px;height:21px"></div>
<div class="a" style="left:592px;top:179px;width:1px;height:1px;background:#000"></div>
<div class="a" style="left:595px;top:179px;width:1px;height:1px;background:#000"></div>
<div class="a" style="left:598px;top:179px;width:1px;height:1px;background:#000"></div>

<div class="a sunk" style="left:408px;top:200px;width:302px;height:21px"></div>
<div class="t" style="left:411px;top:204px;letter-spacing:-0.2px">KEPware.KEPServerEx.V4</div>
<div class="a btn" style="left:692px;top:202px;width:17px;height:17px"></div>
<svg class="a" style="left:697px;top:209px" width="7" height="4" shape-rendering="crispEdges"><rect x="0" y="0" width="7" height="1"/><rect x="1" y="1" width="5" height="1"/><rect x="2" y="2" width="3" height="1"/><rect x="3" y="3" width="1" height="1"/></svg>
<div class="a btn" style="left:715px;top:198px;width:28px;height:21px"></div>
<div class="a" style="left:725px;top:211px;width:1px;height:1px;background:#000"></div>
<div class="a" style="left:728px;top:211px;width:1px;height:1px;background:#000"></div>
<div class="a" style="left:731px;top:211px;width:1px;height:1px;background:#000"></div>

<div class="a sunk" style="left:408px;top:232px;width:155px;height:23px"></div>
<div class="a sunk" style="left:408px;top:268px;width:155px;height:23px"></div>
<div class="t" style="left:573px;top:279px">ms</div>

<div class="a sunk" style="left:295px;top:306px;width:13px;height:13px"></div>
<svg class="a" style="left:298px;top:309px" width="7" height="7" shape-rendering="crispEdges"><rect x="6" y="0" width="1" height="1"/><rect x="5" y="1" width="1" height="1"/><rect x="6" y="1" width="1" height="1"/><rect x="0" y="2" width="1" height="1"/><rect x="4" y="2" width="1" height="1"/><rect x="5" y="2" width="1" height="1"/><rect x="6" y="2" width="1" height="1"/><rect x="0" y="3" width="1" height="1"/><rect x="1" y="3" width="1" height="1"/><rect x="3" y="3" width="1" height="1"/><rect x="4" y="3" width="1" height="1"/><rect x="5" y="3" width="1" height="1"/><rect x="0" y="4" width="1" height="1"/><rect x="1" y="4" width="1" height="1"/><rect x="2" y="4" width="1" height="1"/><rect x="3" y="4" width="1" height="1"/><rect x="4" y="4" width="1" height="1"/><rect x="1" y="5" width="1" height="1"/><rect x="2" y="5" width="1" height="1"/><rect x="3" y="5" width="1" height="1"/><rect x="2" y="6" width="1" height="1"/></svg>
<div class="t" style="left:313px;top:306px;letter-spacing:-0.07px">Activate Server Out of Proc</div>
<div class="a sunk" style="left:295px;top:340px;width:13px;height:13px"></div>
<div class="t" style="left:313px;top:340px;letter-spacing:-0.14px">Allow Optional Data Type Suffix In Item Name</div>

<!-- status bar -->
<div class="a" style="left:0;top:582px;width:945px;height:1px;background:#F4F2EA"></div>
<div class="a" style="left:0;top:583px;width:945px;height:5px;background:linear-gradient(#A8A490,#CFCBBA 35%,#E6E3D2 70%,#ECE9D8)"></div>
<div class="a" style="left:0;top:598px;width:945px;height:7px;background:linear-gradient(#ECE9D8,#DCD8C6)"></div>
<div class="a" style="left:0;top:605px;width:945px;height:1px;background:#F4EED8"></div>

<!-- scrollbar -->
<svg class="a" style="left:1px;top:564px" width="240" height="17" viewBox="1 564 240 17">
<defs>
<linearGradient id="trk" x1="0" y1="0" x2="0" y2="1"><stop offset="0" stop-color="#EEEDE5"/><stop offset="0.3" stop-color="#F4F3EE"/><stop offset="1" stop-color="#FEFEFB"/></linearGradient>
<linearGradient id="sbb" x1="0" y1="0" x2="1" y2="1"><stop offset="0" stop-color="#DCE6FD"/><stop offset="0.5" stop-color="#C6D5FB"/><stop offset="1" stop-color="#B0C6F5"/></linearGradient>
</defs>
<rect x="1" y="564" width="240" height="17" fill="url(#trk)"/>
<rect x="1" y="564" width="240" height="1" fill="#F0EFE8"/>
<rect x="2.5" y="565.5" width="15" height="15" rx="2" fill="url(#sbb)" stroke="#FFFFFF" stroke-width="1"/>
<rect x="3" y="580" width="14" height="1" fill="#8DA6D8"/>
<path d="M11.5,568 L7.5,572 L11.5,576" stroke="#4D6185" stroke-width="2.4" fill="none" stroke-linecap="butt" stroke-linejoin="miter"/>
<rect x="19.5" y="565.5" width="174" height="15" rx="2" fill="url(#sbb)" stroke="#FFFFFF" stroke-width="1"/>
<rect x="20" y="580" width="173" height="1" fill="#8DA6D8"/>
<rect x="193" y="566" width="1" height="14" fill="#A8BEE8"/>
<g fill="#EEF4FE"><rect x="102" y="570" width="1" height="6"/><rect x="104" y="570" width="1" height="6"/><rect x="106" y="570" width="1" height="6"/><rect x="108" y="570" width="1" height="6"/></g>
<g fill="#8CB0F8"><rect x="103" y="570" width="1" height="6"/><rect x="105" y="570" width="1" height="6"/><rect x="107" y="570" width="1" height="6"/><rect x="109" y="570" width="1" height="6"/></g>
<rect x="223.5" y="565.5" width="15" height="15" rx="2" fill="url(#sbb)" stroke="#FFFFFF" stroke-width="1"/>
<rect x="224" y="580" width="14" height="1" fill="#8DA6D8"/>
<path d="M230,568 L234,572 L230,576" stroke="#4D6185" stroke-width="2.4" fill="none" stroke-linecap="butt" stroke-linejoin="miter"/>
</svg>
<!-- status separators -->
<div class="a" style="left:723px;top:587px;width:1px;height:17px;background:#C9C5B3"></div>
<div class="a" style="left:724px;top:587px;width:1px;height:17px;background:#fff"></div>
<div class="a" style="left:856px;top:587px;width:1px;height:17px;background:#C9C5B3"></div>
<div class="a" style="left:857px;top:587px;width:1px;height:17px;background:#fff"></div>
<div class="a" style="left:941px;top:587px;width:1px;height:17px;background:#C9C5B3"></div>
<div class="a" style="left:942px;top:587px;width:1px;height:17px;background:#fff"></div>
</body></html>
